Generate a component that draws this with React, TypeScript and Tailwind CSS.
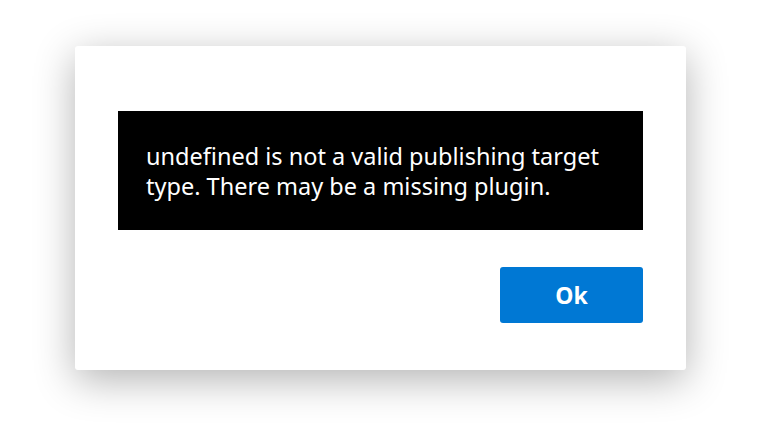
export default function App() {
  return (
    <div className="min-h-[430px] w-full bg-white pl-[75px] pt-[46px] font-['Noto_Sans',sans-serif]">
      <div className="flex w-[611px] flex-col rounded-[3px] bg-white px-[43px] pb-[47px] pt-[65px] shadow-[0_10px_40px_rgba(0,0,0,0.3)]">
        <div className="bg-black px-[28px] py-[29.5px] text-[23.5px] leading-[30px] text-white">
          undefined is not a valid publishing target type. There may be a missing plugin.
        </div>
        <div className="mt-[37px] flex justify-end">
          <button className="h-[56px] w-[143px] rounded-[3px] bg-[#0078d4] text-[23px] font-bold text-white">
            Ok
          </button>
        </div>
      </div>
    </div>
  );
}
